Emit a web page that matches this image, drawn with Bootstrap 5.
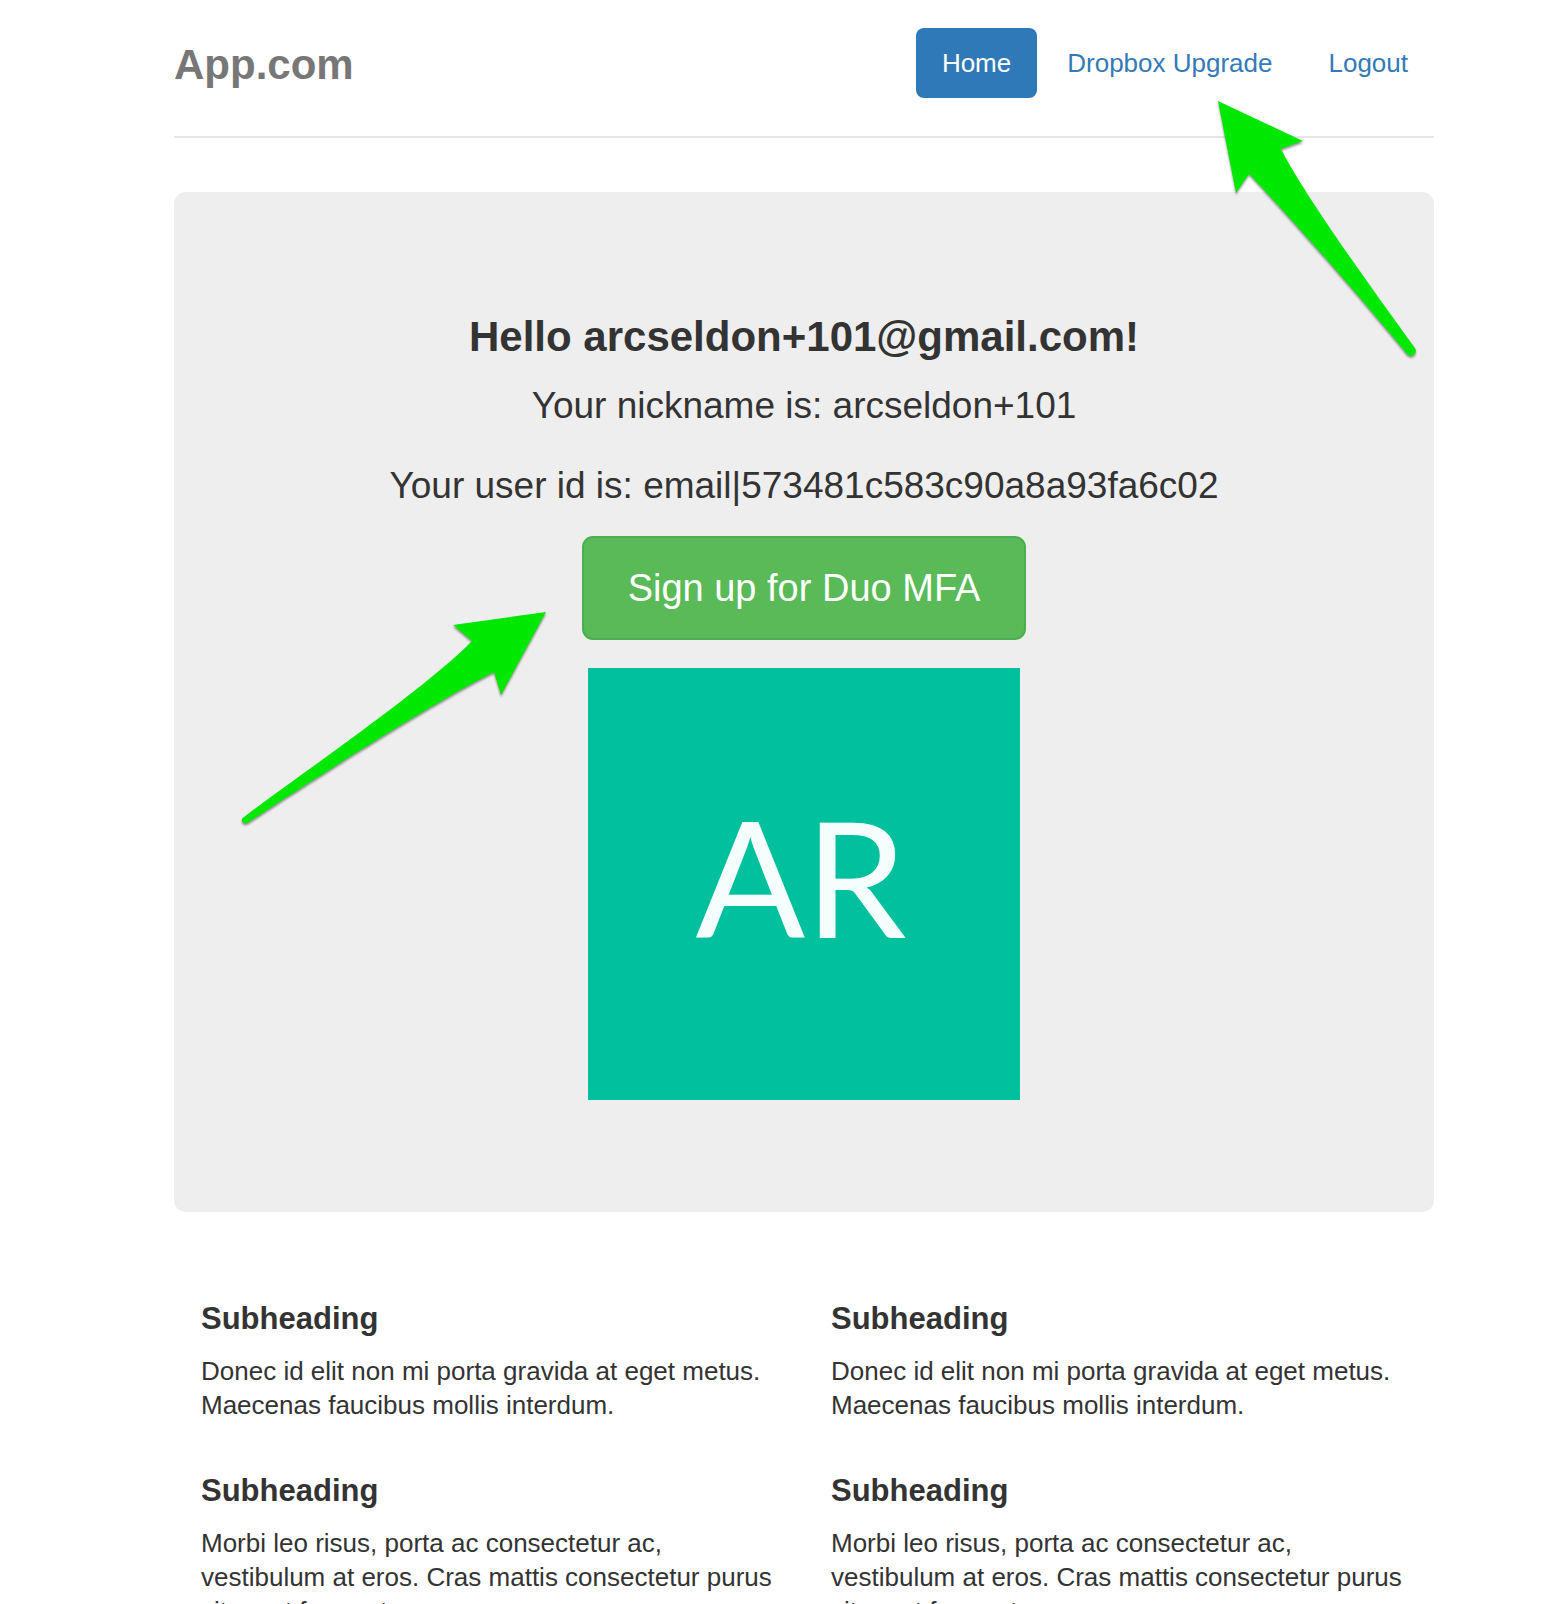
<!DOCTYPE html>
<html lang="en">
<head>
<meta charset="utf-8">
<meta name="viewport" content="width=device-width, initial-scale=1">
<title>App.com</title>
<link href="https://cdn.jsdelivr.net/npm/bootstrap@5.3.0/dist/css/bootstrap.min.css" rel="stylesheet">
<style>
  body { font-family: "Liberation Sans", Arial, sans-serif; font-size: 26px; line-height: 34px; color: #333; background: #fff; padding-left: 42px; height: 100vh; overflow: hidden; }
  .page-wrap { max-width: 1260px; }
  .site-header { padding: 28px 0 38px; margin-bottom: 54px; border-bottom: 2px solid #e5e5e5; }
  .site-name { font-size: 42px; line-height: 70px; font-weight: 700; color: #777; padding-top: 2px; height: 70px; }
  .nav-pills { gap: 4px; --bs-nav-pills-border-radius: 8px; --bs-nav-pills-link-active-bg: #2f79b9; }
  .nav-pills .nav-link { padding: 18px 26px; color: #337ab7; }
  .nav-pills .nav-link.active { color: #fff; }
  .hero { background: #eee; border-radius: 12px; padding: 122px 24px 112px; }
  .hero h1 { font-size: 42px; line-height: 46px; font-weight: 700; margin-bottom: 20px; }
  .intro { font-size: 37px; line-height: 52px; font-weight: 300; margin-bottom: 28px; }
  .intro-last { margin-bottom: 24px; }
  .btn-signup { --bs-btn-bg: #59ba57; --bs-btn-border-color: #4cae4c; --bs-btn-color: #fff; --bs-btn-hover-bg: #449d44; --bs-btn-hover-color: #fff; font-size: 38px; line-height: 52px; padding: 24px 44px; border-width: 2px; border-radius: 11px; margin-bottom: 28px; }
  .avatar { width: 432px; max-width: 100%; aspect-ratio: 1; padding: 0 6px 16px 0; background: #00c09d; color: #f4fffd; font: 400 162px/1 Lato, sans-serif; }
  .pointer { position: absolute; fill: #00e800; filter: drop-shadow(0 2px 1px rgba(0,0,0,.4)); pointer-events: none; }
  .pointer-nav { right: 4px; top: -97px; }
  .pointer-btn { left: 60px; top: 408px; }
  .marketing { margin-top: 90px; --bs-gutter-x: 54px; margin-left: 0; margin-right: 0; }
  .marketing h2 { font-size: 31px; line-height: 34px; font-weight: 700; margin-bottom: 18px; }
  .marketing p { margin-bottom: 52px; }
</style>
</head>
<body>
<div class="page-wrap mx-auto">
  <header class="site-header d-flex justify-content-between align-items-start">
    <div class="site-name">App.com</div>
    <nav aria-label="Main">
      <ul class="nav nav-pills">
        <li class="nav-item"><a class="nav-link active" aria-current="page" href="#">Home</a></li>
        <li class="nav-item"><a class="nav-link" href="#">Dropbox Upgrade</a></li>
        <li class="nav-item"><a class="nav-link" href="#">Logout</a></li>
      </ul>
    </nav>
  </header>

  <main>
    <section class="hero position-relative d-flex flex-column align-items-center text-center">
      <h1>Hello arcseldon+101@gmail.com!</h1>
      <p class="intro">Your nickname is: arcseldon+101</p>
      <p class="intro intro-last">Your user id is: email|573481c583c90a8a93fa6c02</p>
      <button type="button" class="btn btn-signup">Sign up for Duo MFA</button>
      <div class="avatar d-flex align-items-center justify-content-center">AR</div>

      <svg class="pointer pointer-nav" width="220" height="270" viewBox="1210 95 220 270" aria-hidden="true">
        <path d="M1218 101L1303 141L1281 149C1305 196 1370 286 1415 348C1418 353 1412 359 1407 354C1361 298 1300 228 1249 174L1236 193Z"/>
      </svg>
      <svg class="pointer pointer-btn" width="320" height="230" viewBox="234 600 320 230" aria-hidden="true">
        <path d="M546 612L501 695L494 672C430 704 305 785 249 822C243 826 239 820 244 817C305 771 425 689 472 641L453 625Z"/>
      </svg>
    </section>

    <section class="row marketing">
      <div class="col-6">
        <h2>Subheading</h2>
        <p>Donec id elit non mi porta gravida at eget metus. Maecenas faucibus mollis interdum.</p>
        <h2>Subheading</h2>
        <p>Morbi leo risus, porta ac consectetur ac, vestibulum at eros. Cras mattis consectetur purus sit amet fermentum.</p>
      </div>
      <div class="col-6">
        <h2>Subheading</h2>
        <p>Donec id elit non mi porta gravida at eget metus. Maecenas faucibus mollis interdum.</p>
        <h2>Subheading</h2>
        <p>Morbi leo risus, porta ac consectetur ac, vestibulum at eros. Cras mattis consectetur purus sit amet fermentum.</p>
      </div>
    </section>
  </main>
</div>
<script src="https://cdn.jsdelivr.net/npm/bootstrap@5.3.0/dist/js/bootstrap.bundle.min.js"></script>
</body>
</html>
